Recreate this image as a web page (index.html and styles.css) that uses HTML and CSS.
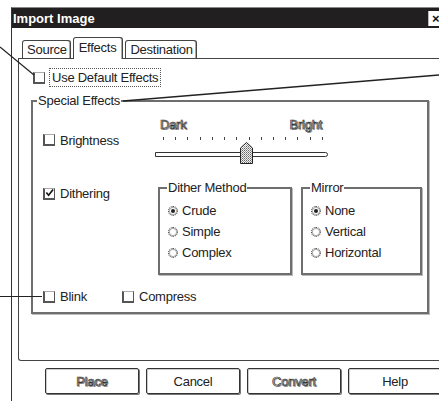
FILE: index.html
```html
<!DOCTYPE html>
<html lang="en">
<head>
    <meta charset="utf-8">
    <title>Import Image</title>
    <link rel="stylesheet" href="styles.css">
</head>
<body>
    <div class="dialog">
        <div class="titlebar">
            <span class="title">Import Image</span>
            <span class="close">×</span>
        </div>
        <div class="content">
            <div class="tabs">
                <span class="tab">Source</span>
                <span class="tab active">Effects</span>
                <span class="tab">Destination</span>
            </div>
            <div class="panel">
                <div class="check-item default-row">
                    <span class="box"></span>
                    <span class="focus">Use Default Effects</span>
                </div>
                <fieldset class="group special">
                    <legend>Special Effects</legend>
                    <div class="fx-row bright-row">
                        <div class="check-item fx-check"><span class="box"></span>Brightness</div>
                        <div class="slider">
                            <div class="slider-labels"><span class="dim">Dark</span><span class="dim">Bright</span></div>
                            <div class="slider-body">
                                <div class="ticks">
                                    <i></i><i></i><i></i><i></i><i></i><i></i><i></i>
                                    <i></i><i></i><i></i><i></i><i></i><i></i><i></i>
                                </div>
                                <div class="track"></div>
                                <svg class="thumb" width="13" height="22" viewBox="0 0 13 22">
                                    <defs>
                                        <pattern id="hatch" width="2" height="2" patternUnits="userSpaceOnUse">
                                            <rect width="2" height="2" fill="#eee"/>
                                            <rect width="1" height="1" fill="#666"/>
                                            <rect x="1" y="1" width="1" height="1" fill="#999"/>
                                        </pattern>
                                    </defs>
                                    <path d="M0.5 6 L6.5 0.5 L12.5 6 V21.5 H0.5 Z" fill="url(#hatch)" stroke="#222"/>
                                    <path d="M1.5 6.5 L6.5 2" stroke="#fff" fill="none"/>
                                </svg>
                            </div>
                        </div>
                    </div>
                    <div class="fx-row dither-row">
                        <div class="check-item fx-check">
                            <span class="box"><svg width="10" height="10" viewBox="0 0 10 10"><path d="M1.5 4.5 L4 7.5 L9 1" stroke="#111" stroke-width="1.8" fill="none"/></svg></span>Dithering
                        </div>
                        <fieldset class="group sub method">
                            <legend>Dither Method</legend>
                            <div class="radio-list">
                                <div class="radio-item"><span class="radio on"></span>Crude</div>
                                <div class="radio-item"><span class="radio"></span>Simple</div>
                                <div class="radio-item"><span class="radio"></span>Complex</div>
                            </div>
                        </fieldset>
                        <fieldset class="group sub mirror">
                            <legend>Mirror</legend>
                            <div class="radio-list">
                                <div class="radio-item"><span class="radio on"></span>None</div>
                                <div class="radio-item"><span class="radio"></span>Vertical</div>
                                <div class="radio-item"><span class="radio"></span>Horizontal</div>
                            </div>
                        </fieldset>
                    </div>
                    <div class="fx-row misc-row">
                        <div class="check-item blink"><span class="box"></span>Blink</div>
                        <div class="check-item"><span class="box"></span>Compress</div>
                    </div>
                </fieldset>
            </div>
            <div class="buttons">
                <span class="btn"><span class="dim">Place</span></span>
                <span class="btn">Cancel</span>
                <span class="btn"><span class="dim">Convert</span></span>
                <span class="btn">Help</span>
            </div>
        </div>
    </div>

    <!-- callout leader lines drawn over the dialog -->
    <svg class="callouts" width="439" height="401" viewBox="0 0 439 401">
        <path d="M0 47 L34 75" stroke="#222" stroke-width="1.2" fill="none"/>
        <path d="M123 101 L439 75" stroke="#222" stroke-width="1.4" fill="none"/>
        <path d="M0 296.5 H42" stroke="#222" stroke-width="1.2" fill="none"/>
    </svg>
</body>
</html>
```

FILE: styles.css
```css
html, body {
    background-color: white;
}
body {
    margin: 0;
    width: 439px;
    height: 401px;
    overflow: hidden;
    position: relative;
    font-family: "Liberation Sans", Arial, sans-serif;
    font-size: 13px;
    line-height: 15px;
    letter-spacing: -0.25px;
    color: #222;
}
.dialog {
    margin: 7px 0 0 11px;
    width: 460px;
    height: 400px;
    border-left: 1px solid #333;
    border-top: 1px solid #888;
}
.titlebar {
    display: flex;
    align-items: center;
    height: 20px;
    background-color: #221f20;
    color: white;
    font-weight: bold;
    letter-spacing: 0;
}
.title {
    width: 415px;
    padding-left: 1px;
}
.close {
    width: 11px;
    height: 15px;
    margin-top: 1px;
    background-color: white;
    color: #111;
    font-size: 13px;
    line-height: 15px;
    padding-left: 3px;
    box-sizing: border-box;
    border-left: 1px solid #bbb;
    overflow: hidden;
}
.content {
    padding: 9px 0 0 6px;
}
.tabs {
    display: flex;
    align-items: flex-end;
    gap: 2px;
    padding-left: 4px;
}
.tab {
    height: 18px;
    box-sizing: border-box;
    padding: 1px 3px 0 4px;
    border: 1px solid #444;
    border-bottom: none;
    border-radius: 3px 3px 0 0;
    box-shadow: inset -1px 0 0 #aaa;
    background-color: white;
}
.tab.active {
    height: 22px;
    margin-bottom: -1px;
    padding: 2px 6px 0 5px;
    position: relative;
    z-index: 1;
}
.panel {
    height: 301px;
    border-top: 1px solid #444;
    border-left: 1px solid #444;
    border-bottom: 1px solid #444;
    border-bottom-left-radius: 3px;
}
.check-item {
    display: flex;
    align-items: center;
    gap: 5px;
    white-space: nowrap;
}
.box {
    width: 12px;
    height: 12px;
    box-sizing: border-box;
    border: 1px solid #555;
    border-left-width: 2px;
    border-bottom-width: 2px;
    border-top-color: #aaa;
    display: flex;
    align-items: center;
    justify-content: center;
    flex: none;
}
.default-row {
    margin: 9px 0 0 14px;
    gap: 4px;
}
.focus {
    border: 1px dotted #555;
    padding: 1px 2px;
}
.group {
    margin: 0;
    padding: 0;
    min-inline-size: 0;
    border: 2px solid #6e6e6e;
    box-shadow: 1px 1px 0 #bbb;
}
.group legend {
    padding: 0 1px;
    margin-left: 4px;
    line-height: 15px;
}
.special {
    margin: 6px 0 0 12px;
    width: 398px;
    box-sizing: border-box;
    padding-bottom: 8px;
}
.fx-row {
    display: flex;
    padding-left: 10px;
}
.fx-check {
    width: 112px;
    flex: none;
}
.bright-row {
    padding-top: 9px;
    align-items: center;
}
.slider {
    width: 173px;
}
.slider-labels {
    display: flex;
    justify-content: space-between;
    padding: 0 6px 0 5px;
}
.dim {
    color: white;
    -webkit-text-stroke: 0.7px #333;
    text-shadow: 1px 1px 0 #999;
}
.slider-body {
    position: relative;
    height: 31px;
}
.ticks {
    display: flex;
    justify-content: space-between;
    padding: 5px 5px 0 8px;
}
.ticks i {
    width: 1px;
    height: 3px;
    background-color: #444;
}
.track {
    margin-top: 12px;
    height: 3px;
    border: 1px solid #333;
    border-radius: 0 3px 3px 0;
}
.thumb {
    position: absolute;
    left: 85px;
    top: 10px;
}
.dither-row {
    margin-top: 17px;
    align-items: flex-start;
}
.dither-row .fx-check {
    margin-top: 6px;
}
.sub {
    margin-left: 3px;
    padding: 0 0 10px 8px;
    box-sizing: border-box;
}
.method {
    width: 134px;
}
.mirror {
    width: 121px;
    margin-left: 9px;
}
.sub legend {
    margin-left: -1px;
}
.radio-list {
    padding-top: 5px;
}
.radio-item {
    display: flex;
    align-items: center;
    gap: 4px;
    height: 21px;
}
.radio {
    width: 10px;
    height: 10px;
    box-sizing: border-box;
    border-radius: 50%;
    border: 1px dotted #333;
    box-shadow: inset 0 0 0 1px #aaa;
    display: flex;
    align-items: center;
    justify-content: center;
}
.radio.on::after {
    content: "";
    width: 4px;
    height: 4px;
    border-radius: 50%;
    background-color: #222;
}
.misc-row {
    margin-top: 14px;
}
.blink {
    width: 79px;
}
.buttons {
    display: flex;
    gap: 7px;
    margin: 7px 0 0 27px;
}
.btn {
    width: 94px;
    height: 26px;
    box-sizing: border-box;
    flex: none;
    display: flex;
    align-items: center;
    justify-content: center;
    border: 1px solid #333;
    border-radius: 2px;
    box-shadow: 1px 1px 0 #777, inset 1px 1px 0 #ccc;
}
.callouts {
    position: absolute;
    left: 0;
    top: 0;
    pointer-events: none;
}
```
